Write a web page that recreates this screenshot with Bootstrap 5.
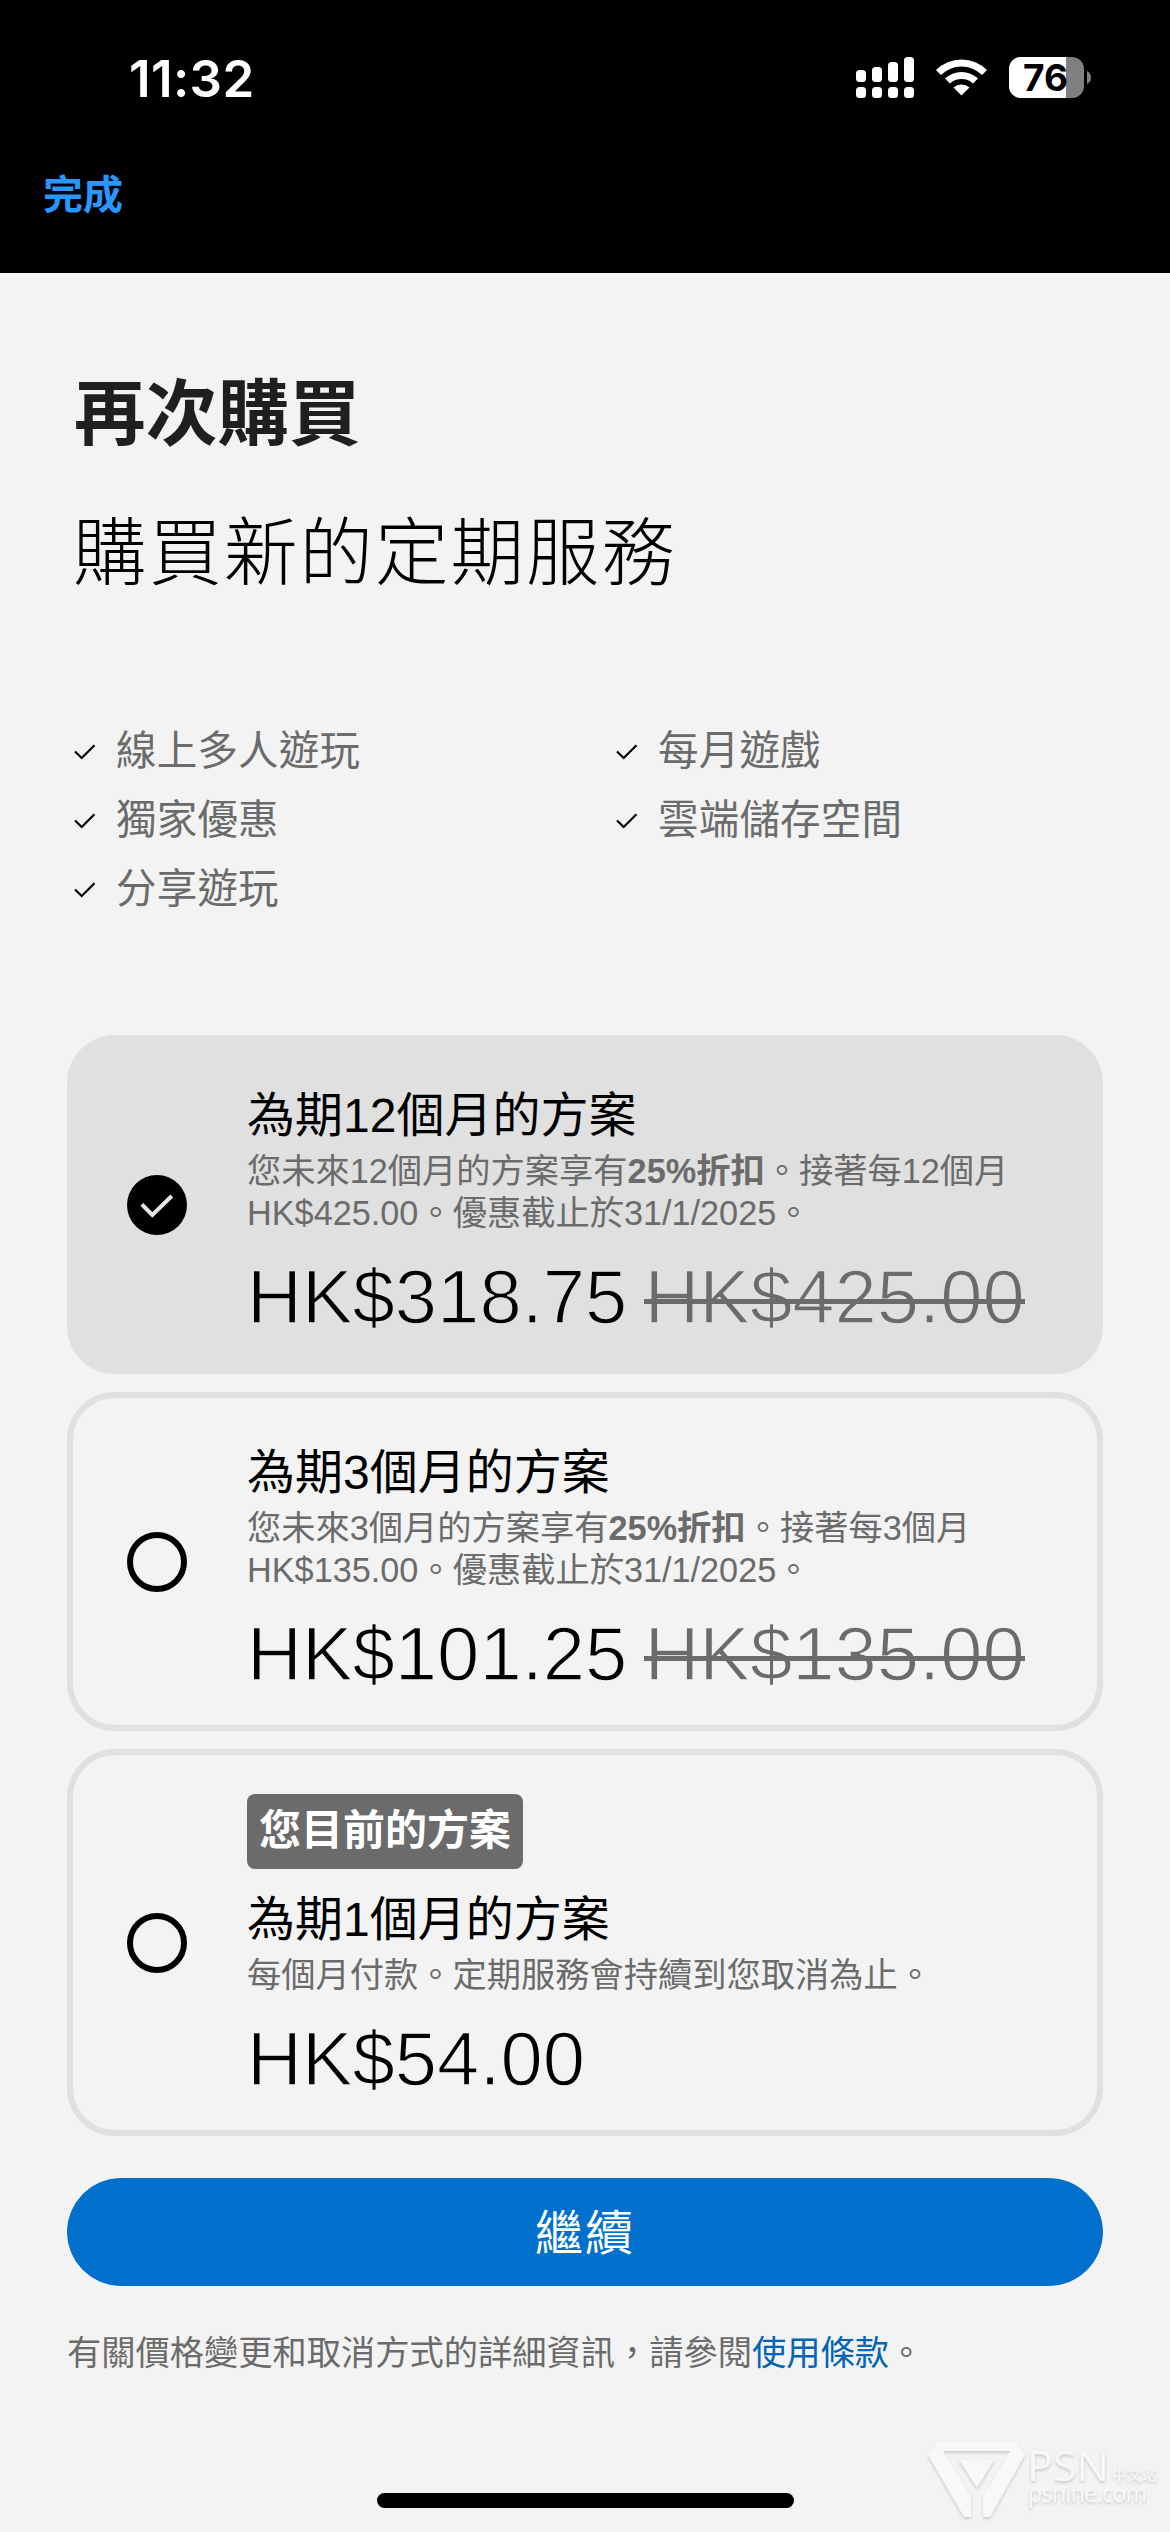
<!DOCTYPE html>
<html lang="zh-Hant-HK">
<head>
<meta charset="utf-8">
<meta name="viewport" content="width=device-width, initial-scale=1">
<title>再次購買</title>
<link href="https://cdn.jsdelivr.net/npm/bootstrap@5.3.0/dist/css/bootstrap.min.css" rel="stylesheet">
<style>
  body { font-family: "Liberation Sans", "Noto Sans CJK TC", sans-serif; background: #f3f3f3; color: #000; height: 2532px; overflow: hidden; }
  .top-area { height: 273px; background: #000; }
  .status-row { height: 156px; padding: 0 78px 0 129px; }
  .status-icons { overflow: visible; }
  .clock { font: 600 51px/1 Inter, sans-serif; letter-spacing: .4px; }
  .done-link { font-size: 40px; line-height: 60px; font-weight: 700; color: #2997ff; padding-left: 43px; margin-top: 9px; }
  .main-area { padding: 0 67px; }
  .heading-1 { font-size: 71.500px; line-height: 100px; font-weight: 700; color: #1f1f1f; letter-spacing: .2px; margin: 91px 0 0 7px; }
  .heading-2 { font-size: 73.500px; line-height: 100px; font-weight: 300; letter-spacing: 2px; margin: 40px 0 0 6px; }
  .perks { margin: 113px 0 0 7px; width: 1084px; color: #6b6b6b; font-size: 40.500px; letter-spacing: .2px; line-height: 69px; }
  .perks li { width: 542px; height: 69px; gap: 20px; }
  .plans { margin-top: 111px; gap: 18px; }
  .plan { height: 339px; border: 6px solid #e0e0e0; border-radius: 48px; padding: 39px 54px 0; --plan-bg: #f3f3f3; background: var(--plan-bg); }
  .plan.chosen { --plan-bg: #e0e0e0; }
  .plan.tall { height: 387px; }
  .tick { width: 60px; height: 60px; }
  .plan-body { margin-left: 60px; width: 800px; }
  .current-tag { display: block; width: max-content; height: 75px; line-height: 74px; padding: 0 12px; border-radius: 8px; background: #6b6b6b; color: #fff; font-size: 42px; font-weight: 700; margin-bottom: 15px; }
  .plan-name { font-size: 48px; line-height: 68px; margin: 0; padding-top: 2px; font-weight: 400; }
  .plan-note { font-size: 34.250px; line-height: 42px; color: #6b6b6b; margin: 0; white-space: nowrap; }
  .price { font-size: 76px; line-height: 90px; margin-top: 18px; white-space: nowrap; word-spacing: -4px; -webkit-text-stroke: 1.5px var(--plan-bg); }
  .price s { position: relative; display: inline-block; color: #6b6b6b; text-decoration: none; }
  .price s::after { content: ""; position: absolute; left: 0; right: 0; top: 47px; height: 5px; background: #6b6b6b; }
  .go-btn { height: 108px; margin-top: 42px; padding: 4px 0 0; --bs-btn-bg: #0070cc; --bs-btn-border-color: #0070cc; font-size: 48px; letter-spacing: 2px; line-height: 1; }
  .terms { font-size: 34.250px; line-height: 50px; color: #6b6b6b; margin: 42px 0 0; }
  .terms a { color: #0064b7; text-decoration: none; }
  .home-bar { width: 417px; height: 15px; left: 377px; top: 2493px; }
  .site-mark { right: 0; bottom: 0; width: 270px; height: 132px; }
</style>
<script src="https://cdn.jsdelivr.net/npm/bootstrap@5.3.0/dist/js/bootstrap.bundle.min.js"></script>
</head>
<body class="position-relative">
<svg width="0" height="0" class="position-absolute">
  <symbol id="chk" viewBox="0 0 22 16"><path d="M1 7.500 L7.700 14 L20.500 1.300" fill="none" stroke="#000" stroke-width="2.200"/></symbol>
</svg>
<header class="top-area text-white">
  <div class="status-row d-flex align-items-center justify-content-between">
    <span class="clock">11:32</span>
    <svg class="status-icons" width="236" height="42" viewBox="0 0 236 42">
      <g fill="#fff">
        <rect x="0" y="13" width="10" height="12" rx="3.500"/><rect x="16" y="10" width="10" height="15" rx="3.500"/><rect x="32" y="5" width="10" height="20" rx="3.500"/><rect x="48" y="0" width="10" height="25" rx="3.500"/>
        <rect x="0" y="30" width="10" height="11" rx="3.500"/><rect x="16" y="30" width="10" height="11" rx="3.500"/><rect x="32" y="30" width="10" height="11" rx="3.500"/><rect x="48" y="30" width="10" height="11" rx="3.500"/>
        <path d="M80 13 A36 36 0 0 1 131 13 L126 18 A29 29 0 0 0 85 18 Z"/>
        <path d="M89 21.500 A24 24 0 0 1 122 21.500 L117 26.500 A17 17 0 0 0 94 26.500 Z"/>
        <path d="M97.500 30.500 A12 12 0 0 1 113.500 30.500 L105.500 38.500 Z"/>
      </g>
      <clipPath id="cell"><rect x="153" y="0" width="75" height="41" rx="12"/></clipPath>
      <g clip-path="url(#cell)"><rect x="153" width="75" height="41" fill="#808080"/><rect x="153" width="57" height="41" fill="#fff"/></g>
      <path d="M231 14 Q235 16 235 20.500 T231 27 Z" fill="#808080"/>
      <text x="189.500" y="34" text-anchor="middle" font-family="Inter" font-weight="700" font-size="37" textLength="45">76</text>
    </svg>
  </div>
  <div class="done-link">完成</div>
</header>
<main class="main-area">
  <h1 class="heading-1">再次購買</h1>
  <h2 class="heading-2">購買新的定期服務</h2>
  <ul class="perks list-unstyled d-flex flex-wrap mb-0">
    <li class="d-flex align-items-center"><svg width="22" height="16"><use href="#chk"/></svg>線上多人遊玩</li>
    <li class="d-flex align-items-center"><svg width="22" height="16"><use href="#chk"/></svg>每月遊戲</li>
    <li class="d-flex align-items-center"><svg width="22" height="16"><use href="#chk"/></svg>獨家優惠</li>
    <li class="d-flex align-items-center"><svg width="22" height="16"><use href="#chk"/></svg>雲端儲存空間</li>
    <li class="d-flex align-items-center"><svg width="22" height="16"><use href="#chk"/></svg>分享遊玩</li>
  </ul>
  <section class="plans d-flex flex-column">
    <div class="plan chosen d-flex">
      <svg class="tick flex-shrink-0" style="margin-top:95px" viewBox="0 0 60 60"><circle cx="30" cy="30" r="30"/><path d="M14.800 29.300 L25.300 40 L44.800 21" fill="none" stroke="#e6e6e6" stroke-width="4"/></svg>
      <div class="plan-body">
        <h3 class="plan-name">為期12個月的方案</h3>
        <p class="plan-note">您未來12個月的方案享有<b>25%折扣</b>。接著每12個月<br>HK$425.00。優惠截止於31/1/2025。</p>
        <div class="price">HK$318.75 <s>HK$425.00</s></div>
      </div>
    </div>
    <div class="plan d-flex">
      <svg class="tick flex-shrink-0" style="margin-top:95px" viewBox="0 0 60 60"><circle cx="30" cy="30" r="27" fill="none" stroke="#000" stroke-width="6"/></svg>
      <div class="plan-body">
        <h3 class="plan-name">為期3個月的方案</h3>
        <p class="plan-note">您未來3個月的方案享有<b>25%折扣</b>。接著每3個月<br>HK$135.00。優惠截止於31/1/2025。</p>
        <div class="price">HK$101.25 <s>HK$135.00</s></div>
      </div>
    </div>
    <div class="plan tall d-flex">
      <svg class="tick flex-shrink-0" style="margin-top:119px" viewBox="0 0 60 60"><circle cx="30" cy="30" r="27" fill="none" stroke="#000" stroke-width="6"/></svg>
      <div class="plan-body">
        <span class="current-tag">您目前的方案</span>
        <h3 class="plan-name">為期1個月的方案</h3>
        <p class="plan-note">每個月付款。定期服務會持續到您取消為止。</p>
        <div class="price">HK$54.00</div>
      </div>
    </div>
  </section>
  <button class="go-btn btn btn-primary rounded-pill w-100">繼續</button>
  <p class="terms">有關價格變更和取消方式的詳細資訊，請參閱<a href="#">使用條款</a>。</p>
</main>
<div class="home-bar position-absolute bg-black rounded-pill"></div>
<svg class="site-mark position-absolute" viewBox="0 0 270 132" fill="#f8f8f8">
  <g style="filter:drop-shadow(0 2px 1.500px rgba(0,0,0,.17))">
    <path fill-rule="evenodd" d="M37 42 H116 L125 55 L90 117 H83 V97 L110 51 H43 L71 97 V117 H64 L28 55 Z"/>
    <path d="M59 60 H94 L77 88 Z"/>
    <text x="127" y="81" font-family="Open Sans" font-size="42" textLength="82" lengthAdjust="spacingAndGlyphs">PSN</text>
    <text x="212" y="80" font-family="Noto Sans CJK SC" font-size="15" textLength="45">中文站</text>
    <text x="128" y="102" font-family="Open Sans" font-size="23" textLength="119">psnine.com</text>
  </g>
</svg>
</body>
</html>
